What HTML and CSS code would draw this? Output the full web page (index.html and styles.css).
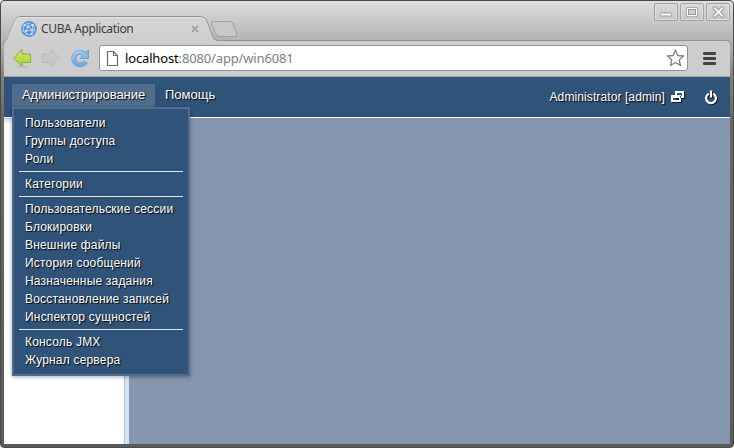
FILE: index.html
```
<!DOCTYPE html>
<html lang="ru">
<head>
<meta charset="utf-8">
<title>CUBA Application</title>
<link rel="stylesheet" href="styles.css">
</head>
<body>
<div class="window">
  <header class="tabstrip">
    <svg class="tab-shape" width="734" height="45" viewBox="0 0 734 45">
      <defs><linearGradient id="tabfill" x1="0" y1="0" x2="0" y2="1"><stop offset="0" stop-color="#d5d5d5"/><stop offset="1" stop-color="#cdcdcd"/></linearGradient></defs>
      <path d="M4 45V43Q5 40 8 38Q10 35 14 22Q16 16.500 20 16.500H201Q205 16.500 207 21L213 37Q214 40.500 218 40.500H726Q730.500 40.500 730.500 45Z" fill="url(#tabfill)" stroke="#929292"/>
      <path d="M8 39Q10 35 14.500 23Q16 17.500 20 17.500H201Q204 17.500 206 21" fill="none" stroke="#e5e5e5"/>
      <path d="M212.500 21.500H230Q232 21.500 233 24L236.500 34Q237 36.500 235 36.500H220Q217 36.500 216 34L211.500 24Q211 21.500 213 21.500Z" fill="#c8c8c8" stroke="#a0a0a0"/>
    </svg>
    <div class="tab">
      <svg class="favicon" width="16" height="16" viewBox="0 0 16 16"><circle cx="8" cy="8" r="7.900" fill="#5a8ed0"/><path d="M3 4L7 2L12 4L14 9L11 13L6 14L2 10ZM3 4L7 6L12 4L11 9L14 9M7 2V6L5 10L2 10M5 10L6 14M5 10L11 9L11 13M7 6L11 9" fill="none" stroke="#bfdcff" stroke-width=".8"/><g fill="#d5e8ff"><circle cx="3.500" cy="4" r="1"/><circle cx="7" cy="6" r="1"/><circle cx="12" cy="4" r="1"/><circle cx="5" cy="10" r="1"/><circle cx="11" cy="9" r="1"/><circle cx="10.500" cy="13" r="1"/></g></svg>
      <span class="tab-title">CUBA Application</span>
      <svg width="8" height="8" viewBox="0 0 8 8"><path d="M1 1L7 7M7 1L1 7" stroke="#939393" stroke-width="1.300"/></svg>
    </div>
    <div class="controls">
      <span class="control"><svg width="22" height="16" viewBox="0 0 22 16"><rect x="5.500" y="9" width="11" height="3" rx="1.200" fill="#fff" stroke="#999"/></svg></span>
      <span class="control"><svg width="22" height="16" viewBox="0 0 22 16"><rect x="6.500" y="4.500" width="9" height="7" rx="1" fill="none" stroke="#999" stroke-width="3.200"/><rect x="6.500" y="4.500" width="9" height="7" rx="1" fill="#d0d0d0" stroke="#fff" stroke-width="1.500"/><rect x="7.500" y="5.500" width="7" height="5" fill="none" stroke="#999"/></svg></span>
      <span class="control"><svg width="22" height="16" viewBox="0 0 22 16"><path d="M7.500 4L15.500 12M15.500 4L7.500 12" stroke="#999" stroke-width="4" stroke-linecap="round"/><path d="M7.500 4L15.500 12M15.500 4L7.500 12" stroke="#f4f4f4" stroke-width="2" stroke-linecap="round"/></svg></span>
    </div>
  </header>
  <div class="toolbar">
    <svg class="nav" width="90" height="24" viewBox="0 0 90 24">
      <defs>
        <linearGradient id="green" x1="0" y1="0" x2="0" y2="1"><stop offset="0" stop-color="#d0e96a"/><stop offset="1" stop-color="#a9cf3c"/></linearGradient>
        <linearGradient id="blue" x1="0" y1="0" x2="0" y2="1"><stop offset="0" stop-color="#9ac8f2"/><stop offset="1" stop-color="#77a9da"/></linearGradient>
      </defs>
      <ellipse cx="11" cy="21" rx="7" ry=".8" fill="#bdbdbd"/>
      <path d="M1.500 12L10 3.500V8H18.500V16.500H10V20.500Z" fill="url(#green)" stroke="#8aaa45" stroke-linejoin="round"/>
      <path d="M47.500 12L39 3.500V8H30.500V16.500H39V20.500Z" fill="#c8c8c6" stroke="#b9b9b7" stroke-linejoin="round"/>
      <path d="M72.700 8.300A6.300 6.300 0 1 0 73.600 15.500" fill="none" stroke="#739fcb" stroke-width="5"/>
      <path d="M76.500 4V12.500H68L71 9L73.500 6.500Z" fill="#83b5e5" stroke="#739fcb"/>
      <path d="M73 9A6.300 6.300 0 1 0 73.300 15.200" fill="none" stroke="url(#blue)" stroke-width="3.400"/>
    </svg>
    <div class="address">
      <svg width="13" height="17" viewBox="0 0 13 17"><path d="M1.500 1.500H7.500L11.500 5.500V15.500H1.500ZM7.500 1.500V5.500H11.500" fill="#fff" stroke="#6c6c6c" stroke-width="1.200"/></svg>
      <span class="url"><b>localhost</b>:8080/app/win6081</span>
      <svg class="star" width="20" height="20" viewBox="0 0 20 20"><path d="M9.500 2L11.700 7.500L17.500 8L13.200 12L14.500 17.500L9.500 14.500L4.500 17.500L5.800 12L1.500 8L7.300 7.500Z" fill="#fff" stroke="#808080" stroke-width="1.300" stroke-linejoin="round"/></svg>
    </div>
    <div class="hamburger"><i></i><i></i><i></i></div>
  </div>
  <main class="app">
    <nav class="menubar">
      <div class="menu-open">Администрирование
        <div class="dropdown">
          <span>Пользователи</span><span>Группы доступа</span><span>Роли</span>
          <hr>
          <span>Категории</span>
          <hr>
          <span>Пользовательские сессии</span><span>Блокировки</span><span>Внешние файлы</span><span>История сообщений</span><span>Назначенные задания</span><span>Восстановление записей</span><span>Инспектор сущностей</span>
          <hr>
          <span>Консоль JMX</span><span>Журнал сервера</span>
        </div>
      </div>
      <div class="menu-item">Помощь</div>
      <div class="user">
        <span>Administrator [admin]</span>
        <svg class="windows" width="14" height="12" viewBox="0 0 14 12" shape-rendering="crispEdges"><path d="M5 7H13V1H14V8H10V11H1V12H11V9H5Z" fill="#0b1828"/><path d="M4 0H13V7H9V5H11V2H6V4H4ZM0 4H10V11H0ZM2 7V9H8V7Z" fill="#fff" fill-rule="evenodd"/></svg>
        <svg class="power" width="14" height="15" viewBox="0 0 14 15"><path d="M3.700 3.800A4.900 4.900 0 1 0 8.300 3.800M6 .5V7.500" fill="none" stroke="#111" stroke-width="2" transform="translate(1 1)"/><path d="M3.700 3.800A4.900 4.900 0 1 0 8.300 3.800M6 .5V7.500" fill="none" stroke="#fff" stroke-width="2.200"/></svg>
      </div>
    </nav>
    <div class="workspace">
      <aside class="folders"></aside>
      <div class="splitter"></div>
      <section class="content"></section>
    </div>
  </main>
</div>
</body>
</html>
```
FILE: styles.css
```
* { box-sizing: border-box; }
body { margin: 0; background: #fff; font-family: "Liberation Sans", Arial, sans-serif; }
.window {
  position: relative;
  width: 734px;
  height: 448px;
  display: flex;
  flex-direction: column;
  overflow: hidden;
  border: 1px solid #4b4a48;
  border-radius: 4px;
  padding: 0 2px 3px 3px;
  background: linear-gradient(#dedede, #b0b0b0 42px, #84827f 75px, #686663 120px, #5d5b5a);
}
.tabstrip { height: 43px; flex: none; display: flex; justify-content: space-between; }
.tab-shape { position: absolute; left: -1px; top: -1px; }
.tab { position: relative; display: flex; align-items: center; width: 195px; height: 25px; margin: 15px 0 0 17px; }
.tab-title { width: 147px; margin: 0 3px 0 4px; font: 12px/18px "Noto Sans", sans-serif; letter-spacing: -.36px; color: #3c3c3c; white-space: nowrap; }
.favicon { flex: none; }
.controls { position: relative; display: flex; gap: 2px; margin: 2px 1px 0 0; height: 18px; }
.control { width: 24px; height: 18px; border: 1px solid #a1a1a1; border-radius: 2px; background: linear-gradient(#d9d9d9, #c8c8c8); box-shadow: inset 0 0 0 1px #dedede; }
.control svg { display: block; }
.toolbar { position: relative; flex: none; display: flex; align-items: flex-start; height: 33px; margin-right: 1px; background: #cdcdcd; border-bottom: 1px solid #a5a5a5; padding-left: 8px; }
.nav { flex: none; margin-top: 2px; }
.address { display: flex; align-items: center; width: 589px; height: 26px; margin: 1px 0 0 -3px; padding: 0 1px 0 6px; background: #fff; border: 1px solid #929292; border-radius: 3px; }
.url { flex: 1; margin-left: 6px; font: 13px/18px "Noto Sans", sans-serif; letter-spacing: -.15px; color: #7e7e7e; white-space: nowrap; }
.url b { font-weight: 400; color: #000; }
.hamburger { display: flex; flex-direction: column; gap: 2px; margin: 8px 0 0 15px; }
.hamburger i { width: 13px; height: 3px; border-radius: 1px; background: #444; }
.app { position: relative; flex: 1; min-height: 0; display: flex; flex-direction: column; margin-right: 1px; background: #fff; }
.menubar { display: flex; height: 41px; flex: none; background: #305379; border-bottom: 1px solid #fff; color: #fff; padding: 7px 11px 0 8px; text-shadow: 1px 1px 1px #000; font-size: 13px; line-height: 22px; }
.menu-open { position: relative; width: 143px; height: 24px; padding-left: 10px; background: #506d8d; white-space: nowrap; letter-spacing: -.05px; }
.menu-item { margin-left: 10px; }
.dropdown { position: absolute; z-index: 2; left: 0; top: 23px; width: 178px; height: 269px; padding: 5px; border: 2px solid #506d8d; background: #305379; box-shadow: 0 1px 4px rgba(0,0,0,.35); font-size: 12px; letter-spacing: .19px; }
.dropdown span { display: block; height: 18px; line-height: 18px; padding-left: 6px; }
.dropdown hr { margin: 3px 0; border: 0; height: 1px; background: #e3e8ed; }
.user { display: flex; margin-left: auto; font-size: 12px; line-height: 26px; letter-spacing: .1px; }
.windows { margin: 7px 0 0 6px; }
.power { margin: 6px 0 0 20px; }
.workspace { display: flex; flex: 1; }
.folders { width: 120px; background: #fff; box-shadow: inset 0 5px 6px -4px #a9b7c8; }
.splitter { width: 5px; background: #d5e2ef; border-left: 1px solid #a6c5df; }
.content { flex: 1; background: #8497af; }
```
